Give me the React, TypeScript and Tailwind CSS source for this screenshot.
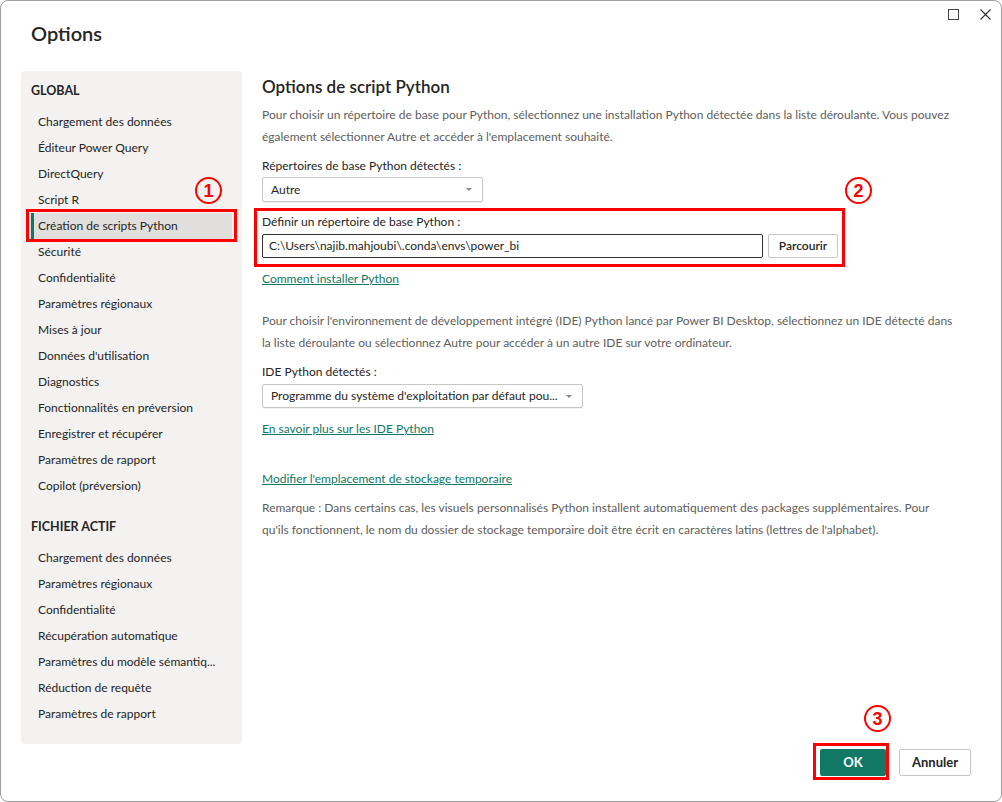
const globalItems = [
  "Chargement des données",
  "Éditeur Power Query",
  "DirectQuery",
  "Script R",
  "Création de scripts Python",
  "Sécurité",
  "Confidentialité",
  "Paramètres régionaux",
  "Mises à jour",
  "Données d'utilisation",
  "Diagnostics",
  "Fonctionnalités en préversion",
  "Enregistrer et récupérer",
  "Paramètres de rapport",
  "Copilot (préversion)",
]

const fileItems = [
  "Chargement des données",
  "Paramètres régionaux",
  "Confidentialité",
  "Récupération automatique",
  "Paramètres du modèle sémantiq...",
  "Réduction de requête",
  "Paramètres de rapport",
]

function Caret() {
  return (
    <svg width="6" height="3" viewBox="0 0 6 3" className="shrink-0">
      <path d="M0 0h6L3 3z" fill="#8a8886" />
    </svg>
  )
}

function NavItem({ label, active }: { label: string; active?: boolean }) {
  return (
    <div
      className={
        "mx-[10px] flex h-[26px] items-center whitespace-nowrap " +
        (active ? "bg-[#e1dfdd]" : "")
      }
    >
      <div className={"h-full w-[3px] " + (active ? "bg-[#117865]" : "")} />
      <span className="pl-[4px]">{label}</span>
    </div>
  )
}

function Badge({ n, x, y }: { n: string; x: string; y: string }) {
  return (
    <div
      className={`absolute flex h-[27px] w-[27px] items-center justify-center rounded-full border-[2.5px] border-[#ff0000] font-['Liberation_Sans',sans-serif] text-[18px] font-bold leading-none text-[#ff0000] ${x} ${y}`}
    >
      {n}
    </div>
  )
}

export default function App() {
  return (
    <div className="relative h-[802px] w-[1002px] bg-white font-['Lato','Liberation_Sans',sans-serif] text-[12px] text-[#252423]">
      <div className="flex h-full w-full flex-col rounded-[8px] border border-[#9e9e9e] bg-white">
        {/* title bar */}
        <div className="relative flex h-[70px] items-start">
          <h1 className="pl-[30px] pt-[18px] text-[20px] font-semibold leading-[28px] text-[#252423]">
            Options
          </h1>
        </div>

        <div className="flex flex-1 gap-[20px] pl-[20px]">
          {/* sidebar */}
          <aside className="flex h-[673px] w-[221px] flex-col rounded-[4px] bg-[#f3f2f1] pt-[10px]">
            <div className="flex h-[20px] items-center pl-[10px] text-[12.5px] font-bold">GLOBAL</div>
            <div className="mt-[8px]">
              {globalItems.map((it) => (
                <NavItem key={it} label={it} active={it === "Création de scripts Python"} />
              ))}
            </div>
            <div className="mt-[18px] flex h-[20px] items-center pl-[10px] text-[12.5px] font-bold">
              FICHIER ACTIF
            </div>
            <div className="mt-[8px]">
              {fileItems.map((it) => (
                <NavItem key={it} label={it} />
              ))}
            </div>
          </aside>

          {/* main */}
          <main className="flex flex-col pt-[4px]">
            <h2 className="h-[24px] text-[17px] font-semibold leading-[24px]">Options de script Python</h2>
            <p className="mt-[5px] whitespace-nowrap leading-[22px] text-[#605e5c]">
              Pour choisir un répertoire de base pour Python, sélectionnez une installation Python détectée dans la liste déroulante. Vous pouvez
              <br />
              également sélectionner Autre et accéder à l'emplacement souhaité.
            </p>
            <div className="mt-[8px] leading-[20px]">Répertoires de base Python détectés :</div>
            <div className="mt-[1px] flex h-[25px] w-[221px] items-center justify-between rounded-[2px] border border-[#c8c6c4] pl-[8px] pr-[10px] shadow-[0_1px_1px_rgba(0,0,0,0.06)]">
              <span>Autre</span>
              <Caret />
            </div>
            <div className="mt-[10px] leading-[20px]">Définir un répertoire de base Python :</div>
            <div className="mt-[2px] flex gap-[5px]">
              <div className="flex h-[24px] w-[501px] items-center rounded-[2px] border border-[#323130] pl-[6px]">
                C:\Users\najib.mahjoubi\.conda\envs\power_bi
              </div>
              <button className="flex h-[24px] w-[70px] items-center justify-center rounded-[2px] border border-[#c8c6c4] font-semibold">
                Parcourir
              </button>
            </div>
            <a className="mt-[11px] leading-[20px] text-[#117865] underline">Comment installer Python</a>
            <p className="mt-[21px] whitespace-nowrap leading-[22px] text-[#605e5c]">
              Pour choisir l'environnement de développement intégré (IDE) Python lancé par Power BI Desktop, sélectionnez un IDE détecté dans
              <br />
              la liste déroulante ou sélectionnez Autre pour accéder à un autre IDE sur votre ordinateur.
            </p>
            <div className="mt-[8px] leading-[20px]">IDE Python détectés :</div>
            <div className="mt-[2px] flex h-[24px] w-[321px] items-center justify-between rounded-[2px] border border-[#c8c6c4] pl-[8px] pr-[10px] shadow-[0_1px_1px_rgba(0,0,0,0.06)]">
              <span className="whitespace-nowrap">Programme du système d'exploitation par défaut pou...</span>
              <Caret />
            </div>
            <a className="mt-[11px] leading-[20px] text-[#117865] underline">En savoir plus sur les IDE Python</a>
            <a className="mt-[30px] leading-[20px] text-[#117865] underline">Modifier l'emplacement de stockage temporaire</a>
            <p className="mt-[8px] whitespace-nowrap leading-[22px] text-[#605e5c]">
              Remarque : Dans certains cas, les visuels personnalisés Python installent automatiquement des packages supplémentaires. Pour
              <br />
              qu'ils fonctionnent, le nom du dossier de stockage temporaire doit être écrit en caractères latins (lettres de l'alphabet).
            </p>
          </main>
        </div>

        {/* footer */}
        <div className="flex justify-end gap-[13px] pb-[25px] pr-[30px]">
          <button className="flex h-[27px] w-[66px] items-center justify-center rounded-[2px] bg-[#117865] text-[13px] font-bold text-white">
            OK
          </button>
          <button className="flex h-[27px] w-[72px] items-center justify-center rounded-[2px] border border-[#c8c6c4] text-[13px] font-bold">
            Annuler
          </button>
        </div>
      </div>

      {/* window controls */}
      <svg className="absolute left-[948px] top-[9px]" width="11" height="11" viewBox="0 0 11 11">
        <rect x="0.5" y="0.5" width="10" height="10" fill="none" stroke="#444444" strokeWidth="1" />
      </svg>
      <svg className="absolute left-[980px] top-[9px]" width="11" height="11" viewBox="0 0 11 11">
        <path d="M0.5 0.5L10.5 10.5M10.5 0.5L0.5 10.5" fill="none" stroke="#333333" strokeWidth="1.1" />
      </svg>

      {/* annotations */}
      <div className="absolute left-[26px] top-[209px] h-[33px] w-[211px] border-[3px] border-[#ff0000]" />
      <div className="absolute left-[254px] top-[208px] h-[59px] w-[591px] border-[3px] border-[#ff0000]" />
      <div className="absolute left-[813px] top-[743px] h-[37px] w-[76px] border-[3px] border-[#ff0000]" />
      <Badge n="1" x="left-[195px]" y="top-[177px]" />
      <Badge n="2" x="left-[845px]" y="top-[177px]" />
      <Badge n="3" x="left-[864px]" y="top-[705px]" />
    </div>
  )
}
